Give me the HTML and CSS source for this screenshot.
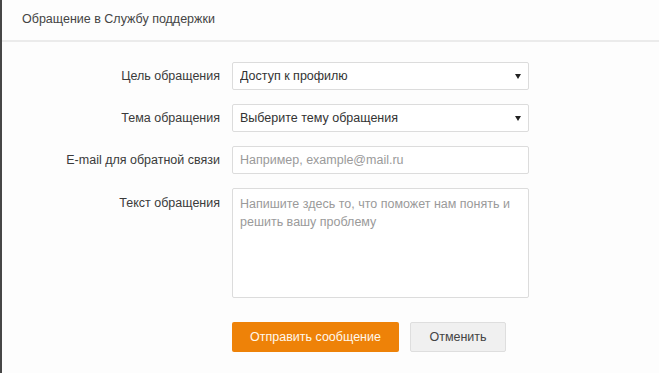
FILE: index.html
```html
<!DOCTYPE html>
<html lang="ru">
<head>
    <meta charset="UTF-8">
    <meta name="viewport" content="width=device-width, initial-scale=1.0">
    <title>Обращение в Службу поддержки</title>
    <link rel="stylesheet" href="styles.css">
</head>
<body>
    <div class="dialog">
        <!-- Header -->
        <div class="dialog-header">Обращение в Службу поддержки</div>

        <!-- Form -->
        <form class="support-form">
            <label class="field-label" for="goal">Цель обращения</label>
            <div class="select-wrap">
                <select id="goal" class="field">
                    <option>Доступ к профилю</option>
                </select>
                <span class="arrow"></span>
            </div>

            <label class="field-label" for="topic">Тема обращения</label>
            <div class="select-wrap">
                <select id="topic" class="field">
                    <option>Выберите тему обращения</option>
                </select>
                <span class="arrow"></span>
            </div>

            <label class="field-label" for="email">E-mail для обратной связи</label>
            <input id="email" class="field" type="text" placeholder="Например, example@mail.ru">

            <label class="field-label label-top" for="message">Текст обращения</label>
            <textarea id="message" class="field message" placeholder="Напишите здесь то, что поможет нам понять и решить вашу проблему"></textarea>

            <div></div>
            <div class="form-buttons">
                <button type="submit" class="btn btn-primary">Отправить сообщение</button>
                <button type="button" class="btn btn-secondary">Отменить</button>
            </div>
        </form>
    </div>
</body>
</html>
```

FILE: styles.css
```css
/* General Styling */
body {
    font-family: "Liberation Sans", Arial, sans-serif;
    font-size: 12.5px;
    color: #333;
    margin: 0;
    padding: 0;
    background: #fdfdfd;
}

.dialog {
    min-height: 373px;
    border-left: 2px solid #474747;
    box-sizing: border-box;
}

/* Header */
.dialog-header {
    height: 42px;
    line-height: 38px;
    padding-left: 20px;
    color: #444;
    border-bottom: 2px solid #ebebeb;
    box-sizing: border-box;
}

/* Form Layout */
.support-form {
    display: grid;
    grid-template-columns: 218px 297px;
    column-gap: 12px;
    row-gap: 14px;
    padding-top: 20px;
}

.field-label {
    text-align: right;
    align-self: center;
    color: #3a3a3a;
}

.label-top {
    align-self: start;
    padding-top: 8px;
}

.field {
    width: 100%;
    height: 28px;
    box-sizing: border-box;
    border: 1px solid #dcdcdc;
    border-radius: 2px;
    background: #fff;
    padding: 0 7px;
    font-family: inherit;
    font-size: 12.5px;
    color: #333;
    outline: none;
}

.field::placeholder {
    color: #9a9a9a;
}

select.field {
    appearance: none;
    -webkit-appearance: none;
}

.select-wrap {
    position: relative;
}

.arrow {
    position: absolute;
    right: 8px;
    top: 12px;
    border-left: 3px solid transparent;
    border-right: 3px solid transparent;
    border-top: 5px solid #222;
}

.message {
    height: 110px;
    padding: 6px 7px;
    line-height: 18px;
    resize: none;
}

/* Buttons */
.form-buttons {
    display: flex;
    gap: 11px;
    margin-top: 10px;
}

.btn {
    height: 30px;
    font-family: inherit;
    font-size: 12.5px;
    border-radius: 2px;
    cursor: pointer;
}

.btn-primary {
    width: 167px;
    background: #ee8208;
    color: #fff8ec;
    border: none;
}

.btn-secondary {
    width: 96px;
    background: #f0f0f0;
    color: #444;
    border: 1px solid #dedede;
}
```
